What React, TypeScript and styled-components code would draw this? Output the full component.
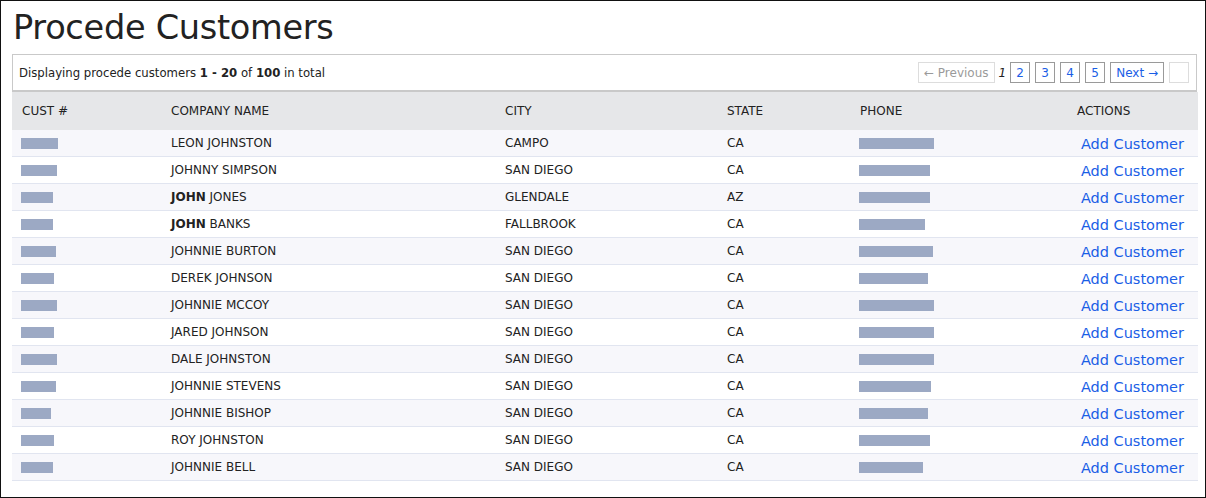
import React from 'react';
import styled, { createGlobalStyle } from 'styled-components';

const GlobalStyle = createGlobalStyle`
  html, body {
    margin: 0;
    padding: 0;
    background: #fff;
  }
  body {
    font-family: 'DejaVu Sans', 'Open Sans', sans-serif;
    color: #222;
  }
`;

const Page = styled.div`
  box-sizing: border-box;
  width: 1206px;
  height: 498px;
  border: 1px solid #111;
  padding: 0 8px 0 11px;
  overflow: hidden;
`;

const Title = styled.h1`
  margin: 0;
  padding: 6px 0 0 1px;
  height: 47px;
  font-size: 33.6px;
  font-weight: 400;
  letter-spacing: -0.3px;
  color: #222;
  line-height: 42px;
`;

const Panel = styled.div`
  box-sizing: border-box;
  height: 38px;
  border: 1px solid #c9c9c9;
  border-bottom-width: 2px;
  display: flex;
  align-items: center;
  justify-content: space-between;
  padding: 0 7px 0 6px;
  font-size: 11.7px;
`;

const Pager = styled.div`
  display: flex;
  align-items: center;
  gap: 5px;
`;

const PageBox = styled.a<{ $disabled?: boolean }>`
  box-sizing: border-box;
  height: 21px;
  min-width: 20px;
  padding: 0 5px;
  display: inline-flex;
  align-items: center;
  justify-content: center;
  border: 1px solid ${(p) => (p.$disabled ? '#ddd' : '#9a9a9a')};
  color: ${(p) => (p.$disabled ? '#9a9a9a' : '#1a5ee6')};
  font-size: 12px;
  text-decoration: none;
`;

const Current = styled.em`
  font-size: 12px;
  margin: 0 -1px;
`;

const Table = styled.table`
  width: 1186px;
  border-collapse: collapse;
  table-layout: fixed;
  font-size: 12px;
`;

const HeadCell = styled.th`
  height: 38px;
  background: #e6e7e9;
  text-align: left;
  font-weight: 400;
  padding: 0 0 0 10px;
`;

const Row = styled.tr<{ $odd: boolean }>`
  background: ${(p) => (p.$odd ? '#f7f7fb' : '#fff')};
  border-bottom: 1px solid #e1e5f0;
`;

const Cell = styled.td`
  height: 26px;
  padding: 0 0 0 10px;
  line-height: 14px;
  white-space: nowrap;
`;

const ActionCell = styled(Cell)`
  text-align: right;
  padding: 0 14px 0 0;
`;

const Bar = styled.span`
  display: block;
  height: 11px;
  margin-left: -1px;
  background: #9ca9c4;
`;

const LinkText = styled.a`
  display: inline-block;
  margin-top: 2px;
  color: #1a5ee6;
  font-size: 14.5px;
  line-height: 14px;
  text-decoration: none;
`;

type Customer = {
  first: string;
  rest: string;
  bold?: boolean;
  city: string;
  state: string;
  cust: number;
  phone: number;
};

const rows: Customer[] = [
  { first: 'LEON', rest: ' JOHNSTON', city: 'CAMPO', state: 'CA', cust: 37, phone: 75 },
  { first: 'JOHNNY', rest: ' SIMPSON', city: 'SAN DIEGO', state: 'CA', cust: 36, phone: 71 },
  { first: 'JOHN', rest: ' JONES', bold: true, city: 'GLENDALE', state: 'AZ', cust: 32, phone: 71 },
  { first: 'JOHN', rest: ' BANKS', bold: true, city: 'FALLBROOK', state: 'CA', cust: 32, phone: 66 },
  { first: 'JOHNNIE', rest: ' BURTON', city: 'SAN DIEGO', state: 'CA', cust: 35, phone: 74 },
  { first: 'DEREK', rest: ' JOHNSON', city: 'SAN DIEGO', state: 'CA', cust: 33, phone: 69 },
  { first: 'JOHNNIE', rest: ' MCCOY', city: 'SAN DIEGO', state: 'CA', cust: 36, phone: 75 },
  { first: 'JARED', rest: ' JOHNSON', city: 'SAN DIEGO', state: 'CA', cust: 33, phone: 75 },
  { first: 'DALE', rest: ' JOHNSTON', city: 'SAN DIEGO', state: 'CA', cust: 36, phone: 75 },
  { first: 'JOHNNIE', rest: ' STEVENS', city: 'SAN DIEGO', state: 'CA', cust: 35, phone: 72 },
  { first: 'JOHNNIE', rest: ' BISHOP', city: 'SAN DIEGO', state: 'CA', cust: 30, phone: 69 },
  { first: 'ROY', rest: ' JOHNSTON', city: 'SAN DIEGO', state: 'CA', cust: 33, phone: 71 },
  { first: 'JOHNNIE', rest: ' BELL', city: 'SAN DIEGO', state: 'CA', cust: 32, phone: 64 },
];

const cols = [149, 334, 222, 133, 217, 131];

const App = () => (
  <Page>
    <GlobalStyle />
    <Title>Procede Customers</Title>
    <Panel>
      <span>
        Displaying procede customers <b>1&nbsp;-&nbsp;20</b> of <b>100</b> in total
      </span>
      <Pager>
        <PageBox $disabled>← Previous</PageBox>
        <Current>1</Current>
        <PageBox href="#">2</PageBox>
        <PageBox href="#">3</PageBox>
        <PageBox href="#">4</PageBox>
        <PageBox href="#">5</PageBox>
        <PageBox href="#">Next →</PageBox>
        <PageBox $disabled />
      </Pager>
    </Panel>
    <Table>
      <colgroup>
        {cols.map((w, i) => (
          <col key={i} style={{ width: w }} />
        ))}
      </colgroup>
      <thead>
        <tr>
          <HeadCell>CUST #</HeadCell>
          <HeadCell>COMPANY NAME</HeadCell>
          <HeadCell>CITY</HeadCell>
          <HeadCell>STATE</HeadCell>
          <HeadCell>PHONE</HeadCell>
          <HeadCell>ACTIONS</HeadCell>
        </tr>
      </thead>
      <tbody>
        {rows.map((r, i) => (
          <Row key={i} $odd={i % 2 === 0}>
            <Cell>
              <Bar style={{ width: r.cust }} />
            </Cell>
            <Cell>
              {r.bold ? <b>{r.first}</b> : r.first}
              {r.rest}
            </Cell>
            <Cell>{r.city}</Cell>
            <Cell>{r.state}</Cell>
            <Cell>
              <Bar style={{ width: r.phone }} />
            </Cell>
            <ActionCell>
              <LinkText href="#">Add Customer</LinkText>
            </ActionCell>
          </Row>
        ))}
      </tbody>
    </Table>
  </Page>
);

export default App;
